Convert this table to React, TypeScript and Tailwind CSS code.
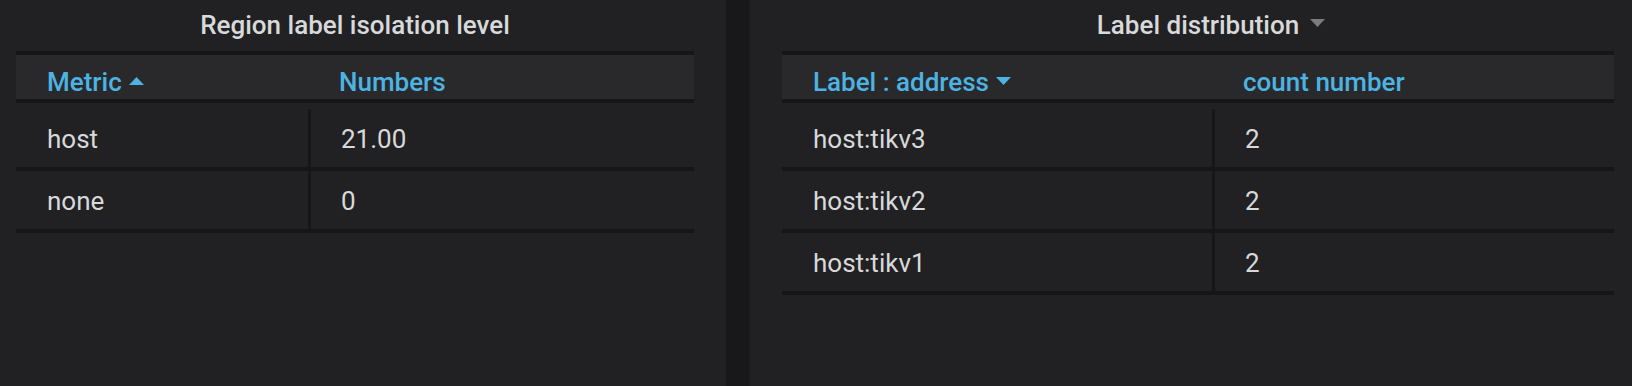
import React from "react";

type Row = [string, string];

function UpCaret() {
  return (
    <svg width="15" height="8" viewBox="0 0 15 8" className="ml-[7px] mb-[2px] shrink-0">
      <polygon points="0,8 7.5,0 15,8" fill="#4db3e2" />
    </svg>
  );
}

function DownCaret({ color }: { color: string }) {
  return (
    <svg width="15" height="8" viewBox="0 0 15 8" className="shrink-0">
      <polygon points="0,0 15,0 7.5,8" fill={color} />
    </svg>
  );
}

function Table({
  col1W,
  h1,
  h2,
  rows,
}: {
  col1W: string;
  h1: React.ReactNode;
  h2: string;
  rows: Row[];
}) {
  return (
    <div className="flex flex-col">
      <div className="flex h-[52px] border-y-4 border-[#161618] bg-[#29292c]">
        <div className={`${col1W} flex items-center pl-[31px] pt-[10px] text-[#4db3e2] font-medium`}>{h1}</div>
        <div className="flex flex-1 items-center pl-[28px] pt-[10px] text-[#4db3e2] font-medium">{h2}</div>
      </div>
      <div className="h-[6px]" />
      {rows.map((r, i) => (
        <div key={i} className="flex h-[62px] border-b-4 border-[#161618]">
          <div className={`${col1W} flex items-center border-r-[3px] border-[#161618] pl-[31px] pt-[1px] text-[#d8d9da]`}>{r[0]}</div>
          <div className="flex flex-1 items-center pl-[30px] pt-[1px] text-[#d8d9da]">{r[1]}</div>
        </div>
      ))}
    </div>
  );
}

export default function App() {
  return (
    <div className="flex h-[386px] w-[1632px] bg-[#212124] text-[26px] leading-none font-['Roboto','Liberation_Sans',sans-serif]">
      <div className="flex w-[726px] flex-col pl-[16px] pr-[32px]">
        <div className="flex h-[51px] items-center justify-center pb-[1px] font-medium text-[#d8d9da]">
          Region label isolation level
        </div>
        <Table
          col1W="w-[295px]"
          h1={
            <>
              <span>Metric</span>
              <UpCaret />
            </>
          }
          h2="Numbers"
          rows={[
            ["host", "21.00"],
            ["none", "0"],
          ]}
        />
      </div>
      <div className="w-[24px] border-r border-[#1c1c1f] bg-[#18181b]" />
      <div className="flex flex-1 flex-col pl-[32px] pr-[18px]">
        <div className="flex h-[51px] items-center justify-center pb-[1px] font-medium text-[#d8d9da]">
          <span className="relative">
            Label distribution
            <span className="absolute left-[calc(100%+11px)] top-[7px]">
              <DownCaret color="#7c7c7e" />
            </span>
          </span>
        </div>
        <Table
          col1W="w-[433px]"
          h1={
            <>
              <span>Label : address</span>
              <span className="ml-[7px] mb-[2px]">
                <DownCaret color="#4db3e2" />
              </span>
            </>
          }
          h2="count number"
          rows={[
            ["host:tikv3", "2"],
            ["host:tikv2", "2"],
            ["host:tikv1", "2"],
          ]}
        />
      </div>
    </div>
  );
}
